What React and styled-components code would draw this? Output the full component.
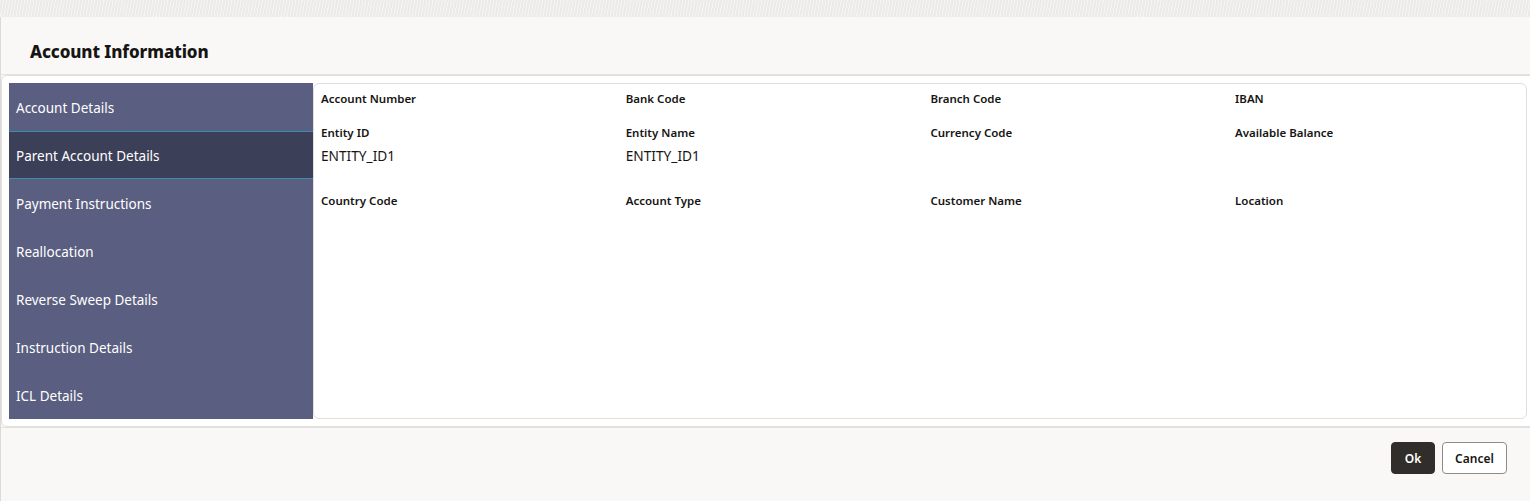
import React from 'react';
import styled, { createGlobalStyle } from 'styled-components';

const GlobalStyle = createGlobalStyle`
    body {
        margin: 0;
        font-family: "Noto Sans", "Open Sans", sans-serif;
        color: #161513;
    }
`;

const Backdrop = styled.div`
    height: 501px;
    padding-top: 17px;
    box-sizing: border-box;
    background-color: #ecebe9;
    background-image: repeating-linear-gradient(
        100deg,
        rgba(255, 255, 255, 0.45) 0 1px,
        transparent 1px 3px
    );
    overflow: hidden;
`;

const Dialog = styled.div`
    height: 100%;
    display: flex;
    flex-direction: column;
    background: #f9f8f6;
    border-left: 1px solid #dcdad6;
`;

const Header = styled.div`
    height: 58px;
    display: flex;
    align-items: center;
    padding: 12px 0 0 29px;
    border-bottom: 1px solid #e4e2de;
    box-sizing: border-box;
`;

const Title = styled.h1`
    margin: 0;
    font-size: 17px;
    font-weight: 800;
    letter-spacing: -0.1px;
`;

const Body = styled.div`
    margin-right: -8px;
    padding: 7px 0 7px 7px;
    display: flex;
    background: #fff;
    border: 1px solid #e0dfdc;
    border-radius: 6px;
`;

const Nav = styled.ul`
    width: 304px;
    margin: 0;
    padding: 0;
    list-style: none;
    background: #5a5e80;
`;

const NavItem = styled.li`
    height: 48px;
    display: flex;
    align-items: center;
    padding: 1px 0 0 7px;
    box-sizing: border-box;
    font-size: 13.5px;
    color: #fff;
    background: ${p => (p.$active ? '#3c3f58' : 'transparent')};
    border-top: 1px solid ${p => (p.$active ? '#3a8cb0' : 'transparent')};
    border-bottom: 1px solid ${p => (p.$active ? '#3a8cb0' : 'transparent')};
`;

const Panel = styled.div`
    width: 1214px;
    height: 336px;
    box-sizing: border-box;
    padding: 5px 0 0 7px;
    border: 1px solid #e0dfdc;
    border-radius: 6px;
`;

const FieldGrid = styled.div`
    display: grid;
    grid-template-columns: repeat(4, 304.7px);
`;

const Field = styled.div`
    padding-bottom: 14px;
`;

const Label = styled.div`
    font-size: 11.5px;
    font-weight: 600;
    line-height: 20px;
`;

const Value = styled.div`
    margin-top: 2px;
    margin-bottom: 10px;
    font-size: 13.7px;
    line-height: 22px;
`;

const Footer = styled.div`
    flex: 1;
    display: flex;
    justify-content: flex-end;
    align-items: flex-start;
    gap: 7px;
    padding: 14px 23px 0 0;
    border-top: 1px solid #e4e2de;
`;

const Button = styled.button`
    height: 32px;
    width: ${p => (p.$primary ? '44px' : '65px')};
    padding: 0;
    font-family: inherit;
    font-size: 12px;
    font-weight: 600;
    border-radius: 4px;
    border: 1px solid ${p => (p.$primary ? '#312d2a' : '#8f8c88')};
    background: ${p => (p.$primary ? '#312d2a' : '#fff')};
    color: ${p => (p.$primary ? '#fff' : '#161513')};
`;

const navItems = [
    'Account Details',
    'Parent Account Details',
    'Payment Instructions',
    'Reallocation',
    'Reverse Sweep Details',
    'Instruction Details',
    'ICL Details',
];

const fields = [
    { label: 'Account Number' },
    { label: 'Bank Code' },
    { label: 'Branch Code' },
    { label: 'IBAN' },
    { label: 'Entity ID', value: 'ENTITY_ID1' },
    { label: 'Entity Name', value: 'ENTITY_ID1' },
    { label: 'Currency Code' },
    { label: 'Available Balance' },
    { label: 'Country Code' },
    { label: 'Account Type' },
    { label: 'Customer Name' },
    { label: 'Location' },
];

const App = () => {
    return (
        <>
            <GlobalStyle />
            <Backdrop>
                <Dialog>
                    <Header>
                        <Title>Account Information</Title>
                    </Header>
                    <Body>
                        <Nav>
                            {navItems.map(item => (
                                <NavItem key={item} $active={item === 'Parent Account Details'}>
                                    {item}
                                </NavItem>
                            ))}
                        </Nav>
                        <Panel>
                            <FieldGrid>
                                {fields.map(({ label, value }) => (
                                    <Field key={label}>
                                        <Label>{label}</Label>
                                        {value && <Value>{value}</Value>}
                                    </Field>
                                ))}
                            </FieldGrid>
                        </Panel>
                    </Body>
                    <Footer>
                        <Button $primary>Ok</Button>
                        <Button>Cancel</Button>
                    </Footer>
                </Dialog>
            </Backdrop>
        </>
    );
};

export default App;
